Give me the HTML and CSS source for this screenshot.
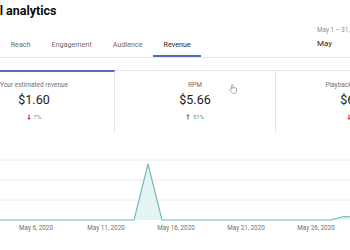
FILE: index.html
```html
<!DOCTYPE html>
<html lang="en">
<head>
    <meta charset="UTF-8">
    <meta name="viewport" content="width=device-width, initial-scale=1.0">
    <title>Channel analytics</title>
    <link rel="stylesheet" href="styles.css">
</head>
<body>
    <div class="page">
        <h1 class="title">Channel analytics</h1>

        <div class="tab-bar">
            <nav class="tabs">
                <a class="tab">Overview</a>
                <a class="tab">Reach</a>
                <a class="tab">Engagement</a>
                <a class="tab">Audience</a>
                <a class="tab is-active">Revenue</a>
            </nav>
            <div class="range">
                <span class="range-dates">May 1 – 31, 2020</span>
                <span class="range-name">May</span>
            </div>
        </div>

        <div class="cards">
            <div class="card is-active">
                <div class="card-label">Your estimated revenue</div>
                <div class="card-value">$1.60</div>
                <div class="card-change is-down">
                    <svg class="arrow" viewBox="0 0 4 6"><path d="M2 0.5V5.2M0.6 3.8L2 5.3L3.4 3.8" /></svg>
                    <span>7%</span>
                </div>
            </div>
            <div class="card">
                <div class="card-label">RPM</div>
                <div class="card-value">$5.66</div>
                <div class="card-change is-up">
                    <svg class="arrow" viewBox="0 0 4 6"><path d="M2 5.5V0.8M0.6 2.2L2 0.7L3.4 2.2" /></svg>
                    <span>51%</span>
                </div>
            </div>
            <div class="card">
                <div class="card-label">Playback-based CPM</div>
                <div class="card-value">$6.76</div>
                <div class="card-change is-down">
                    <svg class="arrow" viewBox="0 0 4 6"><path d="M2 0.5V5.2M0.6 3.8L2 5.3L3.4 3.8" /></svg>
                    <span>13%</span>
                </div>
            </div>

            <!-- mouse pointer caught in the capture -->
            <svg class="pointer" viewBox="0 0 8 10">
                <path d="M2.6 5.2V1.4a0.7 0.7 0 0 1 1.4 0V4.4l0.2-0.6a0.6 0.6 0 0 1 1.1 0.2l0.1-0.1a0.6 0.6 0 0 1 1.1 0.3a0.6 0.6 0 0 1 1 0.4V7.2C7.5 8.4 6.6 9.3 5.3 9.3H4.4C3.6 9.3 3 8.9 2.6 8.3L1 6a0.6 0.6 0 0 1 0.9-0.8Z" />
            </svg>
        </div>

        <svg class="chart" viewBox="0 0 483 105">
            <line class="grid" x1="0" y1="27" x2="483" y2="27" />
            <line class="grid" x1="0" y1="47" x2="483" y2="47" />
            <line class="grid" x1="0" y1="67" x2="483" y2="67" />
            <path class="area" d="M12 87L180 87L194 31L208 87L376 87L390 83.5L404 84L418 84.5L432 84L432 87Z" />
            <path class="line" d="M0 87L180 87L194 31L208 87L376 87L390 83.5L404 84L418 84.5L432 84L483 84" />
            <text class="tick" x="82" y="97">May 6, 2020</text>
            <text class="tick" x="152" y="97">May 11, 2020</text>
            <text class="tick" x="222" y="97">May 16, 2020</text>
            <text class="tick" x="292" y="97">May 21, 2020</text>
            <text class="tick" x="362" y="97">May 26, 2020</text>
            <text class="tick" x="432" y="97">May 31, 2020</text>
        </svg>
    </div>
</body>
</html>
```

FILE: styles.css
```css
html,
body {
    margin: 0;
    overflow: hidden;
    background: #fff;
}

body {
    font-family: Roboto, "Liberation Sans", Arial, sans-serif;
    color: #0d0d0d;
}

.page {
    width: 483px;
    margin-left: -46px;
}

.title {
    margin: 0 0 0 3px;
    font-size: 12.5px;
    font-weight: 700;
    line-height: 22px;
    color: #0d0d0d;
}

/* tabs + date range */
.tab-bar {
    display: flex;
    height: 36px;
    box-sizing: border-box;
    border-bottom: 1px solid #e6e6e6;
}

.tabs {
    display: flex;
    align-items: flex-end;
    margin-left: -4px;
}

.tab {
    padding: 0 10.5px 5px;
    border-bottom: 2px solid transparent;
    font-size: 7.2px;
    line-height: 10px;
    color: #6b6b6b;
}

.tab.is-active {
    color: #1f1f1f;
    border-bottom-color: #4c6fbd;
}

.range {
    display: flex;
    flex-direction: column;
    width: 120px;
    margin-left: auto;
    padding-top: 4px;
}

.range-dates {
    font-size: 6.3px;
    line-height: 8px;
    color: #8c8c8c;
}

.range-name {
    margin-top: 5px;
    font-size: 8px;
    line-height: 10px;
    color: #1f1f1f;
}

/* metric cards */
.cards {
    position: relative;
    display: flex;
    margin-top: 12px;
}

.card {
    width: 161px;
    box-sizing: border-box;
    padding: 10px 0 12px;
    border-top: 1px solid #e6e6e6;
    border-right: 1px solid #e6e6e6;
    text-align: center;
}

.card.is-active {
    padding-top: 9px;
    border-top: 2px solid #4c6fbd;
}

.card-label {
    font-size: 6.5px;
    line-height: 8px;
    color: #707070;
}

.card-value {
    margin-top: 3px;
    font-size: 12.5px;
    line-height: 16px;
    color: #1a1a1a;
}

.card-change {
    display: flex;
    justify-content: center;
    align-items: center;
    gap: 3px;
    margin-top: 5px;
    font-size: 6px;
    line-height: 8px;
    color: #8a8a8a;
}

.arrow {
    width: 4px;
    height: 6px;
    fill: none;
    stroke-width: 1;
}

.is-down .arrow {
    stroke: #c5221f;
}

.is-up .arrow {
    stroke: #2e8b45;
}

.is-up span {
    color: #5f9a6c;
}

.pointer {
    position: absolute;
    left: 275px;
    top: 14px;
    width: 8px;
    height: 10px;
    fill: #fff;
    stroke: #8a8a8a;
    stroke-width: 0.7;
}

/* chart */
.chart {
    display: block;
    width: 483px;
    height: 105px;
}

.grid {
    stroke: #ececec;
    stroke-width: 1;
}

.area {
    fill: #e4f3f3;
}

.line {
    fill: none;
    stroke: #74b8b8;
    stroke-width: 1.1;
    stroke-linejoin: round;
}

.tick {
    font-family: Roboto, "Liberation Sans", Arial, sans-serif;
    font-size: 6.3px;
    fill: #6f6f6f;
    text-anchor: middle;
}
```
